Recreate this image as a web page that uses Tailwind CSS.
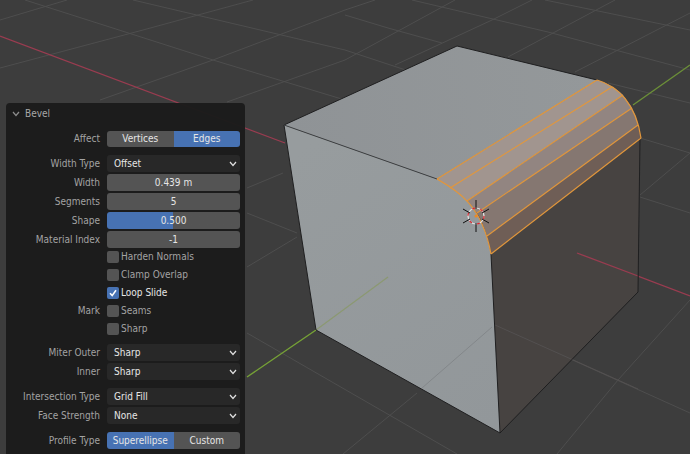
<!DOCTYPE html>
<html lang="en">
<head>
    <meta charset="UTF-8">
    <title>Bevel</title>
    <script src="https://cdn.jsdelivr.net/npm/@tailwindcss/browser@4"></script>
</head>
<body class="relative w-[690px] h-[454px] overflow-hidden bg-[#3d3d3d] font-['DejaVu_Sans_Condensed','DejaVu_Sans',sans-serif] [font-stretch:condensed] text-[10px] leading-none">

    <!-- Viewport -->
    <svg class="absolute inset-0" width="690" height="454" viewBox="0 0 690 454" fill="none">
        <defs>
            <linearGradient id="topFace" x1="284" y1="125" x2="597" y2="80" gradientUnits="userSpaceOnUse">
                <stop offset="0" stop-color="#8f9396"/>
                <stop offset="1" stop-color="#94989a"/>
            </linearGradient>
            <linearGradient id="leftFace" x1="300" y1="150" x2="490" y2="430" gradientUnits="userSpaceOnUse">
                <stop offset="0" stop-color="#979c9e"/>
                <stop offset="1" stop-color="#92979a"/>
            </linearGradient>
        </defs>

        <!-- grid -->
        <g stroke="#4e4e4e" stroke-width="1">
            <path d="M25 0L213 60L345 100"/>
            <path d="M133 0L345 50L442 82"/>
            <path d="M345 15L388 28L442 43"/>
            <path d="M412 0L548 32L690 70"/>
            <path d="M545 0L690 30"/>
            <path d="M608 83L690 103"/>
            <path d="M640 138L690 153"/>
            <path d="M640 197L690 213"/>
            <path d="M247 213L297 233"/>
            <path d="M247 333L457 454"/>
            <path d="M495 325L690 413"/>
            <path d="M0 68L143 30L253 0"/>
            <path d="M0 20L67 0"/>
            <path d="M100 100L213 60L345 10L375 0"/>
            <path d="M227 102L345 60L455 0"/>
            <path d="M395 65L492 20L532 0"/>
            <path d="M508 57L615 0"/>
            <path d="M575 72L690 13"/>
            <path d="M640 195L690 153"/>
            <path d="M557 454L618 380L690 300"/>
            <path d="M343 454L417 393"/>
            <path d="M247 188L283 173"/>
            <path d="M247 267L297 237"/>
        </g>

        <!-- axes -->
        <path d="M0 36L285 143" stroke="#9a3c50" stroke-width="1.3"/>
        <path d="M577 253L690 296" stroke="#9a3c50" stroke-width="1.3"/>
        <path d="M633 105L690 65" stroke="#6c9038" stroke-width="1.4"/>
        <path d="M247 377L316 330" stroke="#76a236" stroke-width="1.4"/>

        <!-- cube -->
        <path d="M490 255L640 138L638 292L500 433Z" fill="#484341" fill-opacity="0.95"/>
        <path d="M495 325L638 389" stroke="#535050"/>
        <path d="M577 253L638 276" stroke="#9a3c50" stroke-width="1.3"/>
        <path d="M284 125L457 46L597 80L437 179Z" fill="url(#topFace)"/>
        <path d="M284 125L437 179C458 191 482 205 491 254L500 433L316 330Z" fill="url(#leftFace)"/>
        <path d="M316 330L388 277" stroke="#84984f" stroke-opacity="0.55" stroke-width="1.2"/>
        <path d="M422 388L492 327" stroke="#83878a"/>

        <!-- bevel strips -->
        <path d="M437 179L597 80C608 83 618 90 623 95L467 201C459 194 450 187 437 179Z" fill="#a1958f"/>
        <path d="M467 201L623 95L632 108L477 213Z" fill="#928581"/>
        <path d="M477 213L632 108C635 114 637 120 638 125L487 236C484 227 481 219 477 213Z" fill="#857771"/>
        <path d="M487 236L638 125L641 138L491 254Z" fill="#6f5e56"/>

        <!-- cube edges -->
        <path d="M597 80L457 46L284 125L316 330L500 433L638 292L640 138" stroke="#1f1f20" stroke-width="1"/>
        <path d="M284 125L437 179" stroke="#3e4042" stroke-width="1"/>
        <path d="M491 254L500 433" stroke="#1f1f20" stroke-width="1"/>

        <!-- selected edges -->
        <g stroke="#e2973c" stroke-width="1.2">
            <path d="M437 179L597 80"/>
            <path d="M450 188L612 87"/>
            <path d="M467 201L623 95"/>
            <path d="M477 213L632 108"/>
            <path d="M487 236L638 125"/>
            <path d="M491 254L641 138"/>
            <path d="M597 80C618 86 636 104 641 138"/>
            <path d="M437 179C458 191 482 205 491 254"/>
        </g>

        <!-- 3d cursor -->
        <g>
            <circle cx="476" cy="216" r="8" stroke="#e4e4e4" stroke-width="1.2"/>
            <circle cx="476" cy="216" r="8" stroke="#d8262e" stroke-width="1.2" stroke-dasharray="3 5.4"/>
            <path d="M476 200V209M476 223V232M463 209L470 213M482 219L489 223M463 223L470 219M482 213L489 209" stroke="#111" stroke-width="1"/>
            <circle cx="476" cy="216" r="1.5" fill="#ee8a22"/>
        </g>
    </svg>

    <!-- Operator panel -->
    <div class="absolute left-[6px] top-[103px] bottom-0 w-[239px] bg-[#1b1b1b]/97 rounded-t-[4px] text-[#a3a3a3]">
        <div class="flex items-center h-[21px] pl-[6px] gap-[5px]">
            <svg width="8" height="6" viewBox="0 0 8 6" fill="none"><path d="M1 1L4 4.5L7 1" stroke="#8c8c8c" stroke-width="1.2"/></svg>
            <span class="text-[#a8a8a8]">Bevel</span>
        </div>

        <!-- Affect -->
        <div class="flex items-center h-[17px] mt-[6px]">
            <div class="w-[94px] text-right">Affect</div>
            <div class="ml-[7px] w-[133px] h-[16px] flex rounded-[3px] overflow-hidden text-[#e6e6e6]">
                <div class="flex-1 flex items-center justify-center bg-[#545454]">Vertices</div>
                <div class="flex-1 flex items-center justify-center bg-[#4772b3]">Edges</div>
            </div>
        </div>

        <div class="flex flex-col gap-[2px] mt-[8px]">
            <div class="flex items-center h-[17px]">
                <div class="w-[94px] text-right">Width Type</div>
                <div class="ml-[7px] w-[133px] h-[17px] flex items-center justify-between pl-[7px] pr-[3px] rounded-[3px] bg-[#282828] text-[#e6e6e6]">
                    <span>Offset</span>
                    <svg width="8" height="6" viewBox="0 0 8 6" fill="none"><path d="M1 1L4 4.5L7 1" stroke="#e0e0e0" stroke-width="1.2"/></svg>
                </div>
            </div>
            <div class="flex items-center h-[17px]">
                <div class="w-[94px] text-right">Width</div>
                <div class="ml-[7px] w-[133px] h-[17px] flex items-center justify-center rounded-[3px] bg-[#545454] text-[#e6e6e6]">0.439 m</div>
            </div>
            <div class="flex items-center h-[17px]">
                <div class="w-[94px] text-right">Segments</div>
                <div class="ml-[7px] w-[133px] h-[17px] flex items-center justify-center rounded-[3px] bg-[#545454] text-[#e6e6e6]">5</div>
            </div>
            <div class="flex items-center h-[17px]">
                <div class="w-[94px] text-right">Shape</div>
                <div class="ml-[7px] w-[133px] h-[17px] flex items-center justify-center rounded-[3px] bg-gradient-to-r from-[#4772b3] from-50% to-[#545454] to-50% text-[#e6e6e6]">0.500</div>
            </div>
            <div class="flex items-center h-[17px]">
                <div class="w-[94px] text-right">Material Index</div>
                <div class="ml-[7px] w-[133px] h-[17px] flex items-center justify-center rounded-[3px] bg-[#545454] text-[#e6e6e6]">-1</div>
            </div>
        </div>

        <!-- Checkboxes -->
        <div class="flex flex-col">
            <div class="flex items-center h-[18px] pl-[101px] gap-[2px]">
                <div class="w-[12px] h-[12px] rounded-[2px] bg-[#545454]"></div>
                <span>Harden Normals</span>
            </div>
            <div class="flex items-center h-[18px] pl-[101px] gap-[2px]">
                <div class="w-[12px] h-[12px] rounded-[2px] bg-[#545454]"></div>
                <span>Clamp Overlap</span>
            </div>
            <div class="flex items-center h-[18px] pl-[101px] gap-[2px]">
                <div class="w-[12px] h-[12px] rounded-[2px] bg-[#4772b3] flex items-center justify-center">
                    <svg width="10" height="10" viewBox="0 0 10 10" fill="none"><path d="M2 5.2L4.2 7.6L8 2.2" stroke="#fff" stroke-width="1.6"/></svg>
                </div>
                <span class="text-[#e6e6e6]">Loop Slide</span>
            </div>
            <div class="flex items-center h-[18px]">
                <div class="w-[94px] text-right">Mark</div>
                <div class="ml-[7px] w-[12px] h-[12px] rounded-[2px] bg-[#545454]"></div>
                <span class="ml-[2px]">Seams</span>
            </div>
            <div class="flex items-center h-[18px] pl-[101px] gap-[2px]">
                <div class="w-[12px] h-[12px] rounded-[2px] bg-[#545454]"></div>
                <span>Sharp</span>
            </div>
        </div>

        <!-- Miter -->
        <div class="flex flex-col gap-[2px] mt-[6px]">
            <div class="flex items-center h-[17px]">
                <div class="w-[94px] text-right">Miter Outer</div>
                <div class="ml-[7px] w-[133px] h-[17px] flex items-center justify-between pl-[7px] pr-[3px] rounded-[3px] bg-[#282828] text-[#e6e6e6]">
                    <span>Sharp</span>
                    <svg width="8" height="6" viewBox="0 0 8 6" fill="none"><path d="M1 1L4 4.5L7 1" stroke="#e0e0e0" stroke-width="1.2"/></svg>
                </div>
            </div>
            <div class="flex items-center h-[17px]">
                <div class="w-[94px] text-right">Inner</div>
                <div class="ml-[7px] w-[133px] h-[17px] flex items-center justify-between pl-[7px] pr-[3px] rounded-[3px] bg-[#282828] text-[#e6e6e6]">
                    <span>Sharp</span>
                    <svg width="8" height="6" viewBox="0 0 8 6" fill="none"><path d="M1 1L4 4.5L7 1" stroke="#e0e0e0" stroke-width="1.2"/></svg>
                </div>
            </div>
        </div>

        <!-- Intersection -->
        <div class="flex flex-col gap-[2px] mt-[8px]">
            <div class="flex items-center h-[17px]">
                <div class="w-[94px] text-right">Intersection Type</div>
                <div class="ml-[7px] w-[133px] h-[17px] flex items-center justify-between pl-[7px] pr-[3px] rounded-[3px] bg-[#282828] text-[#e6e6e6]">
                    <span>Grid Fill</span>
                    <svg width="8" height="6" viewBox="0 0 8 6" fill="none"><path d="M1 1L4 4.5L7 1" stroke="#e0e0e0" stroke-width="1.2"/></svg>
                </div>
            </div>
            <div class="flex items-center h-[17px]">
                <div class="w-[94px] text-right">Face Strength</div>
                <div class="ml-[7px] w-[133px] h-[17px] flex items-center justify-between pl-[7px] pr-[3px] rounded-[3px] bg-[#282828] text-[#e6e6e6]">
                    <span>None</span>
                    <svg width="8" height="6" viewBox="0 0 8 6" fill="none"><path d="M1 1L4 4.5L7 1" stroke="#e0e0e0" stroke-width="1.2"/></svg>
                </div>
            </div>
        </div>

        <!-- Profile -->
        <div class="flex items-center h-[17px] mt-[8px]">
            <div class="w-[94px] text-right">Profile Type</div>
            <div class="ml-[7px] w-[133px] h-[17px] flex rounded-[3px] overflow-hidden text-[#e6e6e6]">
                <div class="flex-1 flex items-center justify-center bg-[#4772b3]">Superellipse</div>
                <div class="flex-1 flex items-center justify-center bg-[#545454]">Custom</div>
            </div>
        </div>
    </div>
</body>
</html>
